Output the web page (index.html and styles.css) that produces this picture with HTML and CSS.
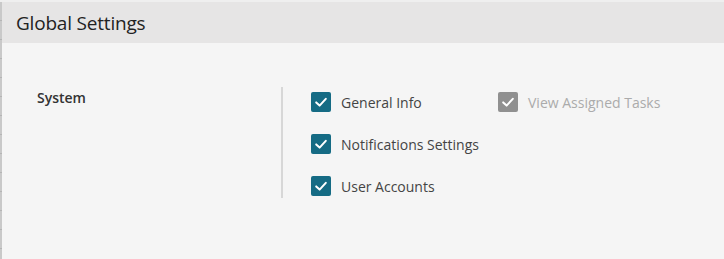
FILE: index.html
```html
<!DOCTYPE html>
<html>
<head>
<meta charset="utf-8">
<link rel="stylesheet" href="styles.css">
</head>
<body>
<div class="page">
  <div class="header"><h1 class="title">Global Settings</h1></div>
  <div class="content">
    <div class="section">
      <div class="section-label">System</div>
      <div class="options">
        <div class="row">
          <label class="check"><span class="box"><svg viewBox="0 0 20 20" width="20" height="20"><path d="M5.2 10.4 L8.6 13.6 L14.8 6.8" fill="none" stroke="#fff" stroke-width="2" stroke-linecap="round" stroke-linejoin="round"/></svg></span><span class="text">General Info</span></label>
          <label class="check disabled"><span class="box"><svg viewBox="0 0 20 20" width="20" height="20"><path d="M5.2 10.4 L8.6 13.6 L14.8 6.8" fill="none" stroke="#fff" stroke-width="2" stroke-linecap="round" stroke-linejoin="round"/></svg></span><span class="text">View Assigned Tasks</span></label>
        </div>
        <div class="row">
          <label class="check"><span class="box"><svg viewBox="0 0 20 20" width="20" height="20"><path d="M5.2 10.4 L8.6 13.6 L14.8 6.8" fill="none" stroke="#fff" stroke-width="2" stroke-linecap="round" stroke-linejoin="round"/></svg></span><span class="text">Notifications Settings</span></label>
        </div>
        <div class="row">
          <label class="check"><span class="box"><svg viewBox="0 0 20 20" width="20" height="20"><path d="M5.2 10.4 L8.6 13.6 L14.8 6.8" fill="none" stroke="#fff" stroke-width="2" stroke-linecap="round" stroke-linejoin="round"/></svg></span><span class="text">User Accounts</span></label>
        </div>
      </div>
    </div>
  </div>
</div>
</body>
</html>
```
FILE: styles.css
```css
html, body {
  margin: 0;
  padding: 0;
  height: 100%;
}
body {
  font-family: "Open Sans", "Noto Sans", sans-serif;
  color: #3a3a3a;
  background: #f5f5f5;
}
.page {
  height: 259px;
  border-top: 2px solid #efefef;
  padding-left: 2px;
  box-sizing: border-box;
  background:
    repeating-linear-gradient(to bottom, #c9c9c9 0, #c9c9c9 18px, #b5b5b5 18px, #b5b5b5 19px) left top / 2px 100% no-repeat,
    #f5f5f5;
}
.header {
  height: 41px;
  background: #e6e5e5;
  display: flex;
  align-items: center;
  padding-left: 14px;
}
.title {
  margin: 0;
  font-size: 19px;
  font-weight: 400;
  color: #222;
  letter-spacing: -0.2px;
}
.content {
  padding-top: 44px;
}
.section {
  display: flex;
}
.section-label {
  width: 279px;
  flex: none;
  padding-left: 35px;
  box-sizing: border-box;
  font-size: 14px;
  font-weight: 600;
  color: #333;
  line-height: 20px;
  padding-top: 1px;
}
.options {
  border-left: 2px solid #d7d7d7;
  padding: 5px 0 2px 28px;
  display: flex;
  flex-direction: column;
  gap: 22px;
}
.row {
  display: flex;
  height: 20px;
}
.check {
  display: flex;
  align-items: center;
  gap: 10px;
  width: 187px;
}
.box {
  width: 20px;
  height: 20px;
  border-radius: 2px;
  background: #156b84;
  display: block;
  flex: none;
}
.box svg {
  display: block;
}
.text {
  font-size: 14px;
  color: #444;
  white-space: nowrap;
}
.disabled .box {
  background: #909090;
}
.disabled .text {
  color: #ababab;
}
```
